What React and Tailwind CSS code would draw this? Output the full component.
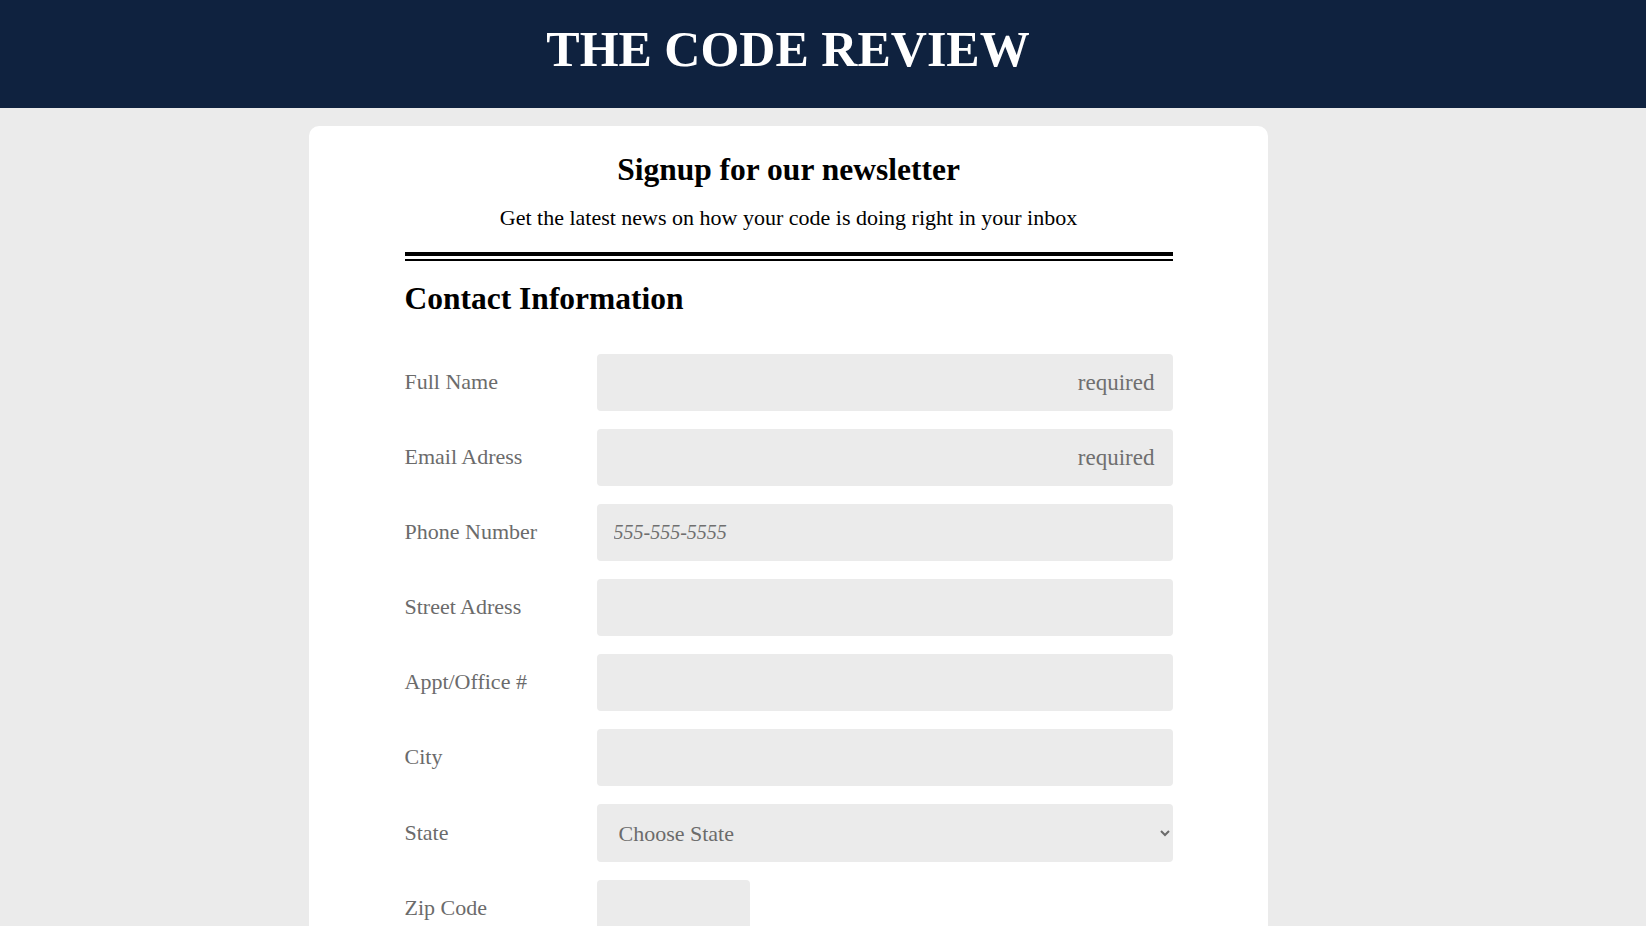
const fields = [
  { label: 'Full Name', placeholder: 'required', align: 'right' },
  { label: 'Email Adress', placeholder: 'required', align: 'right' },
  { label: 'Phone Number', placeholder: '555-555-5555', italic: true },
  { label: 'Street Adress' },
  { label: 'Appt/Office #' },
  { label: 'City' },
]

function Row({ label, children }) {
  return (
    <div className="flex items-center">
      <label className="w-[192px] shrink-0 text-[22px] text-[#6b6b6b] pb-[2px]">{label}</label>
      {children}
    </div>
  )
}

export default function App() {
  return (
    <div className="min-h-screen bg-[#ebebeb] font-['Liberation_Serif',serif]">
      <header className="h-[108px] bg-[#0f223f]">
        <div className="w-[1576px] h-full flex items-center justify-center pb-[10px]">
          <h1 className="text-[50px] font-bold text-white leading-none">THE CODE REVIEW</h1>
        </div>
      </header>

      <main className="pt-[18px] pb-10">
        <div className="ml-[309px] w-[959px] rounded-[10px] bg-white pt-[25px] pb-16">
          <div className="w-[768px] mx-auto">
            <h2 className="text-center text-[31.5px] leading-[37px] font-bold text-black">Signup for our newsletter</h2>
            <p className="mt-4 text-center text-[22px] leading-[28px] text-black">
              Get the latest news on how your code is doing right in your inbox
            </p>
            <div className="mt-[20px] h-[4px] bg-black" />
            <div className="mt-[3px] h-[2px] bg-black" />

            <h3 className="mt-[19px] text-[31.5px] leading-[37px] font-bold text-black">Contact Information</h3>

            <form className="mt-[37px] flex flex-col gap-[18px]">
              {fields.map((f) => (
                <Row key={f.label} label={f.label}>
                  <input
                    type="text"
                    placeholder={f.placeholder}
                    className={`w-[576px] h-[57px] rounded-[4px] bg-[#ebebeb] px-[17px] text-[#333] placeholder:text-[#6f6f6f] outline-none ${
                      f.align === 'right' ? 'text-right pr-[18px] text-[23px]' : ''
                    } ${f.italic ? 'placeholder:italic text-[20px]' : ''} ${!f.align && !f.italic ? 'text-[22px]' : ''}`}
                  />
                </Row>
              ))}
              <Row label="State">
                <select
                  defaultValue=""
                  className="w-[576px] h-[58px] rounded-[4px] bg-[#ebebeb] pl-[18px] pr-[8px] text-[22px] text-[#6b6b6b] outline-none"
                >
                  <option value="">Choose State</option>
                  <option value="CA">California</option>
                  <option value="NY">New York</option>
                  <option value="TX">Texas</option>
                </select>
              </Row>
              <Row label="Zip Code">
                <input
                  type="text"
                  className="w-[153px] h-[57px] rounded-[4px] bg-[#ebebeb] px-[17px] text-[22px] outline-none"
                />
              </Row>
            </form>
          </div>
        </div>
      </main>
    </div>
  )
}
